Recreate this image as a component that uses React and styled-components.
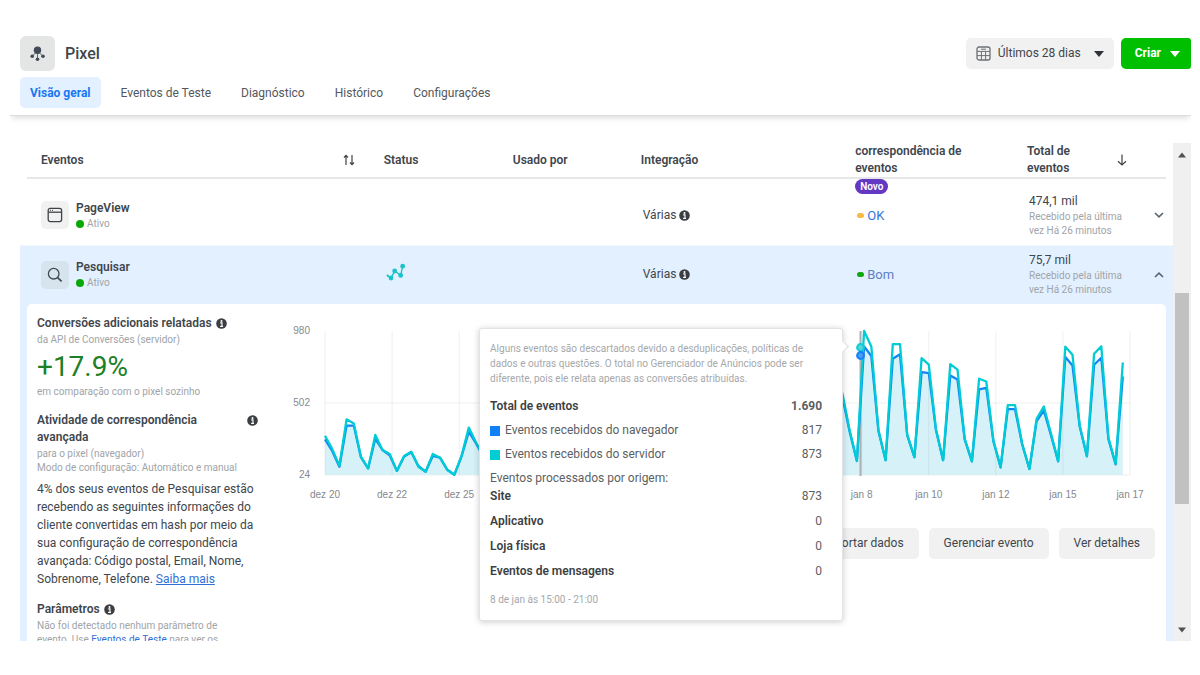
import React, { useState } from 'react';
import styled, { createGlobalStyle } from 'styled-components';

const GlobalStyle = createGlobalStyle`
    * {
        box-sizing: border-box;
    }
    body {
        margin: 0;
        background: #fff;
        color: #40464c;
        font-family: Roboto, "Liberation Sans", sans-serif;
        font-size: 12px;
        line-height: 17px;
    }
    button, select {
        font: inherit;
        color: inherit;
        border: 0;
        cursor: pointer;
    }
`

const Page = styled.div`
    display: flex;
    flex-direction: column;
    height: 100vh;
    padding: 20px 9px 34px 10px;
`

const Header = styled.header`
    flex: none;
    padding: 16px 0 7px 10px;
    border-bottom: 1px solid #dcdcdc;
    box-shadow: 0 4px 6px -2px rgba(0, 0, 0, 0.14);
    clip-path: inset(0 0 -12px 0);
`

const TitleBar = styled.div`
    display: flex;
    align-items: center;
    gap: 10px;
`

const TitleIcon = styled.div`
    display: flex;
    align-items: center;
    justify-content: center;
    width: 35px;
    height: 35px;
    border-radius: 6px;
    background: #e4e6e6;
`

const Title = styled.h1`
    flex: 1;
    margin: 0;
    font-size: 16px;
    font-weight: 500;
    line-height: 20px;
`

const DateField = styled.label`
    display: flex;
    align-items: center;
    gap: 7px;
    height: 31px;
    padding: 0 10px;
    border-radius: 5px;
    background: #f1f1f1;
`

const DateSelect = styled.select`
    appearance: none;
    padding: 0 6px 0 0;
    background: none;
`

const CreateButton = styled.button`
    display: flex;
    align-items: center;
    gap: 9px;
    height: 31px;
    margin-left: -3px;
    padding: 0 11px 0 14px;
    border-radius: 5px 3px 3px 5px;
    background: #00bf00;
    color: #fff;
    font-weight: 700;
`

const Tabs = styled.nav`
    display: flex;
    gap: 10px;
    margin-top: 6px;
`

const Tab = styled.a`
    padding: 8px 10px 6px;
    border-radius: 5px;
    background: ${props => props.$active ? '#e3f0ff' : 'none'};
    color: ${props => props.$active ? '#1877f2' : '#54585d'};
    font-weight: ${props => props.$active ? 700 : 400};
    text-decoration: none;
`

const Body = styled.main`
    display: flex;
    flex: 1;
    min-height: 0;
    padding: 27px 0 0 10px;
    overflow: hidden;
`

const TableArea = styled.div`
    flex: 1;
    min-width: 0;
`

const Table = styled.table`
    width: 100%;
    table-layout: fixed;
    border-collapse: collapse;
`

const HeadRow = styled.tr`
    background: linear-gradient(#e6e7e8, #e6e7e8) bottom / calc(100% - 14px) 2px no-repeat;
`

const HeadCell = styled.th`
    position: relative;
    width: ${props => props.$width};
    height: 36px;
    padding: ${props => props.$first ? '0 17px 2px 21px' : '0 8px 2px 12px'};
    font-weight: 600;
    text-align: left;
`

const HeadContent = styled.div`
    display: flex;
    align-items: center;
    justify-content: space-between;
`

const HeadLabel = styled.div`
    max-width: ${props => props.$max};
`

const SortButton = styled.button`
    display: flex;
    padding: 0;
    background: none;
`

const NewBadge = styled.span`
    position: absolute;
    top: 100%;
    left: 12px;
    padding: 0 5px;
    border-radius: 8px;
    background: #6339c4;
    color: #fff;
    font-size: 10px;
    line-height: 15px;
`

const EventRow = styled.tr`
    background: ${props => props.$open ? '#e3f0ff' : '#fff'};
    border-bottom: ${props => props.$open ? 0 : '1px solid #f5f8fb'};
`

const Cell = styled.td`
    height: ${props => props.$top ? '66px' : '59px'};
    padding: ${props => props.$top ? '7px' : 0} 0 0 ${props => props.$left || '14px'};
`

const EventInfo = styled.div`
    display: flex;
    align-items: center;
    gap: 7px;
`

const EventIcon = styled.div`
    display: flex;
    align-items: center;
    justify-content: center;
    width: 28px;
    height: 28px;
    border-radius: 5px;
    background: ${props => props.$open ? '#d7e4ee' : '#f1f1f1'};
`

const EventName = styled.div`
    font-weight: 600;
`

const Muted = styled.div`
    max-width: ${props => props.$narrow ? '200px' : 'none'};
    color: #a0a4a8;
    font-size: 10px;
    line-height: 14px;
`

const Active = styled(Muted)`
    display: flex;
    align-items: center;
    gap: 3px;
`

const Dot = styled.span`
    flex: none;
    width: ${props => props.$wide ? '7px' : '8px'};
    height: ${props => props.$wide ? '5px' : '8px'};
    border-radius: 4px;
    background: ${props => props.$color};
`

const Inline = styled.div`
    display: flex;
    align-items: center;
    gap: 3px;
`

const Quality = styled.a`
    color: ${props => props.$soft ? '#5f7fc4' : '#3376dc'};
    font-size: 13px;
    text-decoration: none;
`

const Toggle = styled.button`
    display: flex;
    padding: 4px;
    background: none;
`

const DetailCell = styled.td`
    padding: 0 7px;
    background: #e3f0ff;
`

const Detail = styled.div`
    display: flex;
    gap: 27px;
    padding: 11px 9px 20px 10px;
    border-radius: 5px 5px 0 0;
    background: #fff;
`

const Side = styled.aside`
    flex: none;
    width: 221px;
`

const SideTitle = styled.h2`
    display: flex;
    justify-content: ${props => props.$spread ? 'space-between' : 'flex-start'};
    gap: 4px;
    margin: 0 0 1px;
    font-size: 12px;
    font-weight: 600;
    line-height: 17px;

    svg {
        flex: none;
        margin-top: 3px;
    }
`

const Percent = styled.div`
    margin: 4px 0 2px;
    color: #1c8024;
    font-size: 28px;
    line-height: 32px;
`

const Block = styled.section`
    margin-bottom: 13px;
`

const Paragraph = styled.p`
    margin: 5px 0 0;
    line-height: 18px;
`

const Link = styled.a`
    color: #2f6fd6;
    text-decoration: ${props => props.$underline ? 'underline' : 'none'};
`

const ChartArea = styled.div`
    position: relative;
    flex: 1;
    min-width: 0;
`

const ChartSvg = styled.svg`
    display: block;
    width: 100%;
    overflow: visible;

    text {
        fill: #84898e;
        font-family: "Liberation Sans", sans-serif;
        font-size: 10px;
    }
`

const Actions = styled.div`
    display: flex;
    justify-content: flex-end;
    gap: 10px;
    margin-top: 22px;
    padding-right: 2px;
`

const ActionButton = styled.button`
    height: 31px;
    padding: 0 15px;
    border-radius: 5px;
    background: #f1f1f1;
`

const Tooltip = styled.div`
    position: absolute;
    top: 13px;
    right: 36%;
    width: 364px;
    padding: 12px 20px 13px 10px;
    border: 1px solid #e2e3e4;
    border-radius: 3px;
    background: #fff;
    box-shadow: 0 1px 6px rgba(0, 0, 0, 0.2);

    &::after {
        content: '';
        position: absolute;
        top: 13px;
        right: -5px;
        width: 8px;
        height: 8px;
        border: solid #dcdee0;
        border-width: 1px 1px 0 0;
        background: #fff;
        transform: rotate(45deg);
    }
`

const TooltipNote = styled.p`
    margin: 0;
    color: #a6a8aa;
    font-size: 10px;
    line-height: 15px;
`

const TooltipRow = styled.div`
    display: flex;
    align-items: center;
    gap: 5px;
    margin-top: ${props => props.$gap || '7px'};
    color: #5c5f62;
    font-weight: ${props => props.$bold ? 700 : 400};

    b {
        color: #3c3f42;
        font-weight: 600;
    }
    span:last-child {
        margin-left: auto;
    }
`

const Swatch = styled.i`
    width: 10px;
    height: 10px;
    background: ${props => props.$color};
`

const ScrollBar = styled.div`
    display: flex;
    flex: none;
    flex-direction: column;
    width: 18px;
    padding: 9px 2px 8px;
    background: #f0f0f0;

    svg {
        flex: none;
        align-self: center;
    }
`

const Track = styled.div`
    display: flex;
    flex: 1;
    flex-direction: column;
    margin: 5px 0;
`

const Thumb = styled.div`
    flex: 210;
    background: #c1c1c1;
`

const Space = styled.div`
    flex: ${props => props.$size};
`

const Caret = ({color = '#303438', width = 10, up}) => (
    <svg width={width} height="6" viewBox="0 0 10 6" aria-hidden="true">
        <path d={up ? 'M0 6 L5 0 L10 6 Z' : 'M0 0 H10 L5 6 Z'} fill={color} />
    </svg>
)

const InfoIcon = () => (
    <svg width="11" height="11" viewBox="0 0 11 11" aria-hidden="true">
        <circle cx="5.5" cy="5.5" r="5.3" fill="#3b3f43" />
        <circle cx="5.5" cy="2.9" r="1" fill="#fff" />
        <path d="M4.2 4.9 H6 V8.2 M4.1 8.4 H7" fill="none" stroke="#fff" strokeWidth="1.1" />
    </svg>
)

const PixelIcon = () => (
    <svg width="16" height="16" viewBox="0 0 16 16" fill="#434a57" stroke="#434a57" aria-hidden="true">
        <circle cx="7.5" cy="4.2" r="3.7" stroke="none" />
        <path d="M7.5 7 V13 M5.8 6.8 L2.6 9.6 M9.2 6.8 L12.6 9.6" strokeWidth="0.8" />
        <circle cx="2.2" cy="10.2" r="1.8" stroke="none" />
        <circle cx="13" cy="10.2" r="1.8" stroke="none" />
        <circle cx="7.5" cy="13.2" r="1.8" stroke="none" />
    </svg>
)

const CalendarIcon = () => (
    <svg width="15" height="15" viewBox="0 0 15 15" fill="none" stroke="#6b7076" aria-hidden="true">
        <rect x="1" y="1" width="13" height="13" rx="2" strokeWidth="1.3" />
        <path d="M1 5.4 H14 M1 9.6 H14 M5.4 5.4 V14 M9.6 5.4 V14 M5 3.2 H10" />
    </svg>
)

const WindowIcon = () => (
    <svg width="16" height="16" viewBox="0 0 16 16" fill="none" stroke="#3f4347" strokeWidth="1.3" aria-hidden="true">
        <rect x="1.2" y="1.4" width="13.4" height="13.2" rx="2" />
        <path d="M1.2 5.2 H14.6" />
        <path d="M3 3.3 H4 M5 3.3 H6" strokeWidth="1" />
    </svg>
)

const SearchIcon = () => (
    <svg width="16" height="16" viewBox="0 0 16 16" fill="none" stroke="#3f4a52" aria-hidden="true">
        <circle cx="6.7" cy="6.7" r="5.3" strokeWidth="1.3" />
        <path d="M10.6 10.6 L14.6 14.4" strokeWidth="1.7" />
    </svg>
)

const TrendIcon = () => (
    <svg width="20" height="18" viewBox="0 0 20 18" fill="#1cc2c9" stroke="#1cc2c9" aria-hidden="true">
        <path d="M1.6 12.6 L5 15 L8.7 8 L14.7 12.4 L16.7 3.2" fill="none" strokeWidth="1.4" />
        <circle cx="1.6" cy="12.6" r="1.1" stroke="none" />
        <circle cx="5" cy="15" r="2.4" stroke="none" />
        <circle cx="8.7" cy="8" r="2.4" stroke="none" />
        <circle cx="14.7" cy="12.4" r="2.4" stroke="none" />
        <circle cx="16.7" cy="3.2" r="2.4" stroke="none" />
    </svg>
)

const SortIcon = () => (
    <svg width="12" height="12" viewBox="0 0 12 12" fill="none" stroke="#3f4347" strokeWidth="1.2" aria-hidden="true">
        <path d="M3 11 V1.5 M1 3.5 L3 1.4 L5 3.5 M9 1 V10.5 M7 8.5 L9 10.6 L11 8.5" />
    </svg>
)

const ArrowDownIcon = () => (
    <svg width="12" height="12" viewBox="0 0 12 12" fill="none" stroke="#3f4347" strokeWidth="1.2" aria-hidden="true">
        <path d="M6 0.5 V11 M2 7.2 L6 11 L10 7.2" />
    </svg>
)

const Chevron = ({up}) => (
    <svg width="10" height="6" viewBox="0 0 10 6" fill="none" stroke="#5d6670" strokeWidth="1.7" aria-hidden="true">
        <path d={up ? 'M1 5 L5 1.2 L9 5' : 'M1 1 L5 4.8 L9 1'} />
    </svg>
)

// four readings a day, starting on dez 20
const server = [
    284, 197, 86, 394, 366, 146, 68, 290, 190, 164, 51, 150, 179, 79, 46, 164, 139, 59, 26, 153, 339, 241, 153,
    60, 210, 290, 120, 70, 240, 260, 110, 60, 230, 250, 120, 70, 310, 280, 130, 60, 340, 320, 150, 70, 280, 260, 110, 50,
    260, 300, 140, 60, 400, 380, 170, 80, 520, 480, 200, 90, 600, 560, 230, 90, 640, 600, 260, 100, 700, 720, 800, 700,
    563, 319, 119, 980, 878, 323, 122, 893, 893, 292, 142, 800, 756, 330, 122, 760, 723, 264, 115, 663, 645, 252, 75,
    488, 488, 230, 64, 397, 479, 301, 117, 876, 822, 352, 150, 829, 878, 270, 99, 771,
]

const browser = [
    261, 184, 79, 352, 352, 142, 68, 264, 190, 155, 51, 146, 175, 84, 46, 150, 139, 59, 26, 148, 312, 235, 150,
    60, 200, 270, 116, 70, 230, 245, 108, 60, 220, 240, 118, 70, 290, 265, 126, 60, 320, 300, 146, 70, 265, 245, 108, 50,
    250, 285, 136, 60, 380, 360, 166, 80, 490, 455, 195, 90, 560, 530, 225, 90, 600, 570, 250, 100, 660, 680, 750, 660,
    540, 310, 117, 878, 814, 318, 122, 796, 825, 288, 142, 707, 700, 325, 122, 685, 658, 260, 115, 592, 603, 248, 75,
    461, 461, 227, 64, 381, 452, 290, 115, 807, 751, 345, 148, 756, 803, 262, 95, 678,
]

const ticks = ['dez 20', 'dez 22', 'dez 25', 'dez 27', 'dez 29', 'jan 1', 'jan 3', 'jan 5', 'jan 8', 'jan 10', 'jan 12', 'jan 15', 'jan 17']

const LEFT = 40
const WIDTH = 805
const TOP = 16
const BOTTOM = 160

const xAt = (index) => LEFT + index * WIDTH / 112
const yAt = (value) => BOTTOM - (value - 24) / 956 * (BOTTOM - TOP)
const line = (values) => values.map((value, index) => `${xAt(index).toFixed(1)},${yAt(value).toFixed(1)}`).join(' ')

const Chart = () => (
    <ChartSvg viewBox="0 0 872 191" role="img" aria-label="Eventos recebidos">
        {[980, 502, 24].map(value => (
            <g key={value}>
                <text x="25" y={yAt(value) + 3} textAnchor="end">{value}</text>
                {value !== 980 && <path d={`M${LEFT} ${yAt(value)} H${LEFT + WIDTH}`} stroke="#eeeff0" />}
            </g>
        ))}
        <polygon
            points={`${LEFT},${BOTTOM} ${line(browser)} ${xAt(111)},${BOTTOM}`}
            fill="#d7f1f9"
        />
        {ticks.map((tick, index) => {
            const x = LEFT + index * WIDTH / 12
            return (
                <g key={tick}>
                    <path d={`M${x} ${TOP} V${BOTTOM}`} stroke="#5a6a78" strokeOpacity="0.1" />
                    <text x={x} y="183" textAnchor="middle">{tick}</text>
                </g>
            )
        })}
        <path d={`M575.5 ${TOP} V${BOTTOM + 1}`} stroke="#aab0b4" strokeWidth="2" />
        <polyline points={line(browser)} fill="none" stroke="#1485f5" strokeWidth="2.3" strokeLinejoin="round" />
        <polyline points={line(server)} fill="none" stroke="#00ccd6" strokeWidth="2.3" strokeLinejoin="round" />
        <circle cx="575.5" cy="32.5" r="3.4" fill="#55d6dc" stroke="#12cbd4" strokeWidth="2" />
        <circle cx="575.5" cy="40.5" r="3.4" fill="#4aa0f8" stroke="#1680f5" strokeWidth="2" />
    </ChartSvg>
)

const origins = [
    ['Site', '873'],
    ['Aplicativo', '0'],
    ['Loja física', '0'],
    ['Eventos de mensagens', '0'],
]

const ChartTooltip = () => (
    <Tooltip role="tooltip">
        <TooltipNote>
            Alguns eventos são descartados devido a desduplicações, políticas de dados e outras questões. O total no Gerenciador de Anúncios pode ser diferente, pois ele relata apenas as conversões atribuídas.
        </TooltipNote>
        <TooltipRow $bold $gap="12px">
            <b>Total de eventos</b>
            <span>1.690</span>
        </TooltipRow>
        <TooltipRow>
            <Swatch $color="#1080f8" />
            <span>Eventos recebidos do navegador</span>
            <span>817</span>
        </TooltipRow>
        <TooltipRow>
            <Swatch $color="#00ced4" />
            <span>Eventos recebidos do servidor</span>
            <span>873</span>
        </TooltipRow>
        <TooltipRow>Eventos processados por origem:</TooltipRow>
        {origins.map(([name, total], index) => (
            <TooltipRow key={name} $gap={index === 0 ? '1px' : '8px'}>
                <b>{name}</b>
                <span>{total}</span>
            </TooltipRow>
        ))}
        <TooltipRow $gap="12px">
            <TooltipNote>8 de jan às 15:00 - 21:00</TooltipNote>
        </TooltipRow>
    </Tooltip>
)

const EventDetail = () => (
    <Detail>
        <Side>
            <Block>
                <SideTitle>Conversões adicionais relatadas <InfoIcon /></SideTitle>
                <Muted>da API de Conversões (servidor)</Muted>
                <Percent>+17.9%</Percent>
                <Muted>em comparação com o pixel sozinho</Muted>
            </Block>
            <Block>
                <SideTitle $spread>Atividade de correspondência avançada <InfoIcon /></SideTitle>
                <Muted>para o pixel (navegador)</Muted>
                <Muted>Modo de configuração: Automático e manual</Muted>
                <Paragraph>
                    4% dos seus eventos de Pesquisar estão recebendo as seguintes informações do cliente convertidas em hash por meio da sua configuração de correspondência avançada: Código postal, Email, Nome, Sobrenome, Telefone. <Link href="#saiba-mais" $underline>Saiba mais</Link>
                </Paragraph>
            </Block>
            <Block>
                <SideTitle>Parâmetros <InfoIcon /></SideTitle>
                <Muted $narrow>
                    Não foi detectado nenhum parâmetro de evento. Use <Link href="#teste">Eventos de Teste</Link> para ver os
                </Muted>
            </Block>
        </Side>
        <ChartArea>
            <Chart />
            <Actions>
                <ActionButton>Exportar dados</ActionButton>
                <ActionButton>Gerenciar evento</ActionButton>
                <ActionButton>Ver detalhes</ActionButton>
            </Actions>
            <ChartTooltip />
        </ChartArea>
    </Detail>
)

const events = [
    { name: 'PageView', icon: <WindowIcon />, quality: 'OK', color: '#f7b944', total: '474,1 mil' },
    { name: 'Pesquisar', icon: <SearchIcon />, status: <TrendIcon />, quality: 'Bom', color: '#12a812', total: '75,7 mil' },
]

const tabs = ['Visão geral', 'Eventos de Teste', 'Diagnóstico', 'Histórico', 'Configurações']

const Events = () => {
    const [opened, setOpened] = useState('Pesquisar')

    return (
        <Table>
            <thead>
                <HeadRow>
                    <HeadCell $first $width="30.5%">
                        <HeadContent>
                            Eventos
                            <SortButton aria-label="Ordenar"><SortIcon /></SortButton>
                        </HeadContent>
                    </HeadCell>
                    <HeadCell $width="11.2%">Status</HeadCell>
                    <HeadCell $width="11.1%">Usado por</HeadCell>
                    <HeadCell $width="18.6%">Integração</HeadCell>
                    <HeadCell $width="14.9%">
                        <HeadLabel $max="120px">correspondência de eventos</HeadLabel>
                        <NewBadge>Novo</NewBadge>
                    </HeadCell>
                    <HeadCell $width="10.5%">
                        <HeadContent>
                            <HeadLabel $max="60px">Total de eventos</HeadLabel>
                            <SortButton aria-label="Ordenar por total"><ArrowDownIcon /></SortButton>
                        </HeadContent>
                    </HeadCell>
                    <HeadCell as="td" />
                </HeadRow>
            </thead>
            <tbody>
                {events.map((event, index) => {
                    const open = opened === event.name
                    const top = index === 0
                    return (
                        <React.Fragment key={event.name}>
                            <EventRow $open={open}>
                                <Cell $top={top} $left="21px">
                                    <EventInfo>
                                        <EventIcon $open={open}>{event.icon}</EventIcon>
                                        <div>
                                            <EventName>{event.name}</EventName>
                                            <Active><Dot $color="#09a809" />Ativo</Active>
                                        </div>
                                    </EventInfo>
                                </Cell>
                                <Cell $top={top}>{event.status}</Cell>
                                <Cell $top={top} />
                                <Cell $top={top}><Inline>Várias <InfoIcon /></Inline></Cell>
                                <Cell $top={top}>
                                    <Inline>
                                        <Dot $wide $color={event.color} />
                                        <Quality href="#qualidade" $soft={open}>{event.quality}</Quality>
                                    </Inline>
                                </Cell>
                                <Cell $top={top}>
                                    {event.total}
                                    <Muted>Recebido pela última vez Há 26 minutos</Muted>
                                </Cell>
                                <Cell $top={top}>
                                    <Toggle
                                        aria-label={event.name}
                                        aria-expanded={open}
                                        onClick={() => setOpened(open ? null : event.name)}
                                    >
                                        <Chevron up={open} />
                                    </Toggle>
                                </Cell>
                            </EventRow>
                            {open && (
                                <tr>
                                    <DetailCell colSpan="7"><EventDetail /></DetailCell>
                                </tr>
                            )}
                        </React.Fragment>
                    )
                })}
            </tbody>
        </Table>
    )
}

const App = () => (
    <Page>
        <GlobalStyle />
        <Header>
            <TitleBar>
                <TitleIcon><PixelIcon /></TitleIcon>
                <Title>Pixel</Title>
                <DateField>
                    <CalendarIcon />
                    <DateSelect aria-label="Período">
                        <option>Últimos 28 dias</option>
                    </DateSelect>
                    <Caret />
                </DateField>
                <CreateButton>Criar <Caret color="#fff" /></CreateButton>
            </TitleBar>
            <Tabs>
                {tabs.map((tab, index) => (
                    <Tab key={tab} href="#aba" $active={index === 0}>{tab}</Tab>
                ))}
            </Tabs>
        </Header>
        <Body>
            <TableArea>
                <Events />
            </TableArea>
            <ScrollBar>
                <Caret up width={8} color="#505050" />
                <Track>
                    <Space $size={130} />
                    <Thumb />
                    <Space $size={118} />
                </Track>
                <Caret width={8} color="#505050" />
            </ScrollBar>
        </Body>
    </Page>
)

export default App
